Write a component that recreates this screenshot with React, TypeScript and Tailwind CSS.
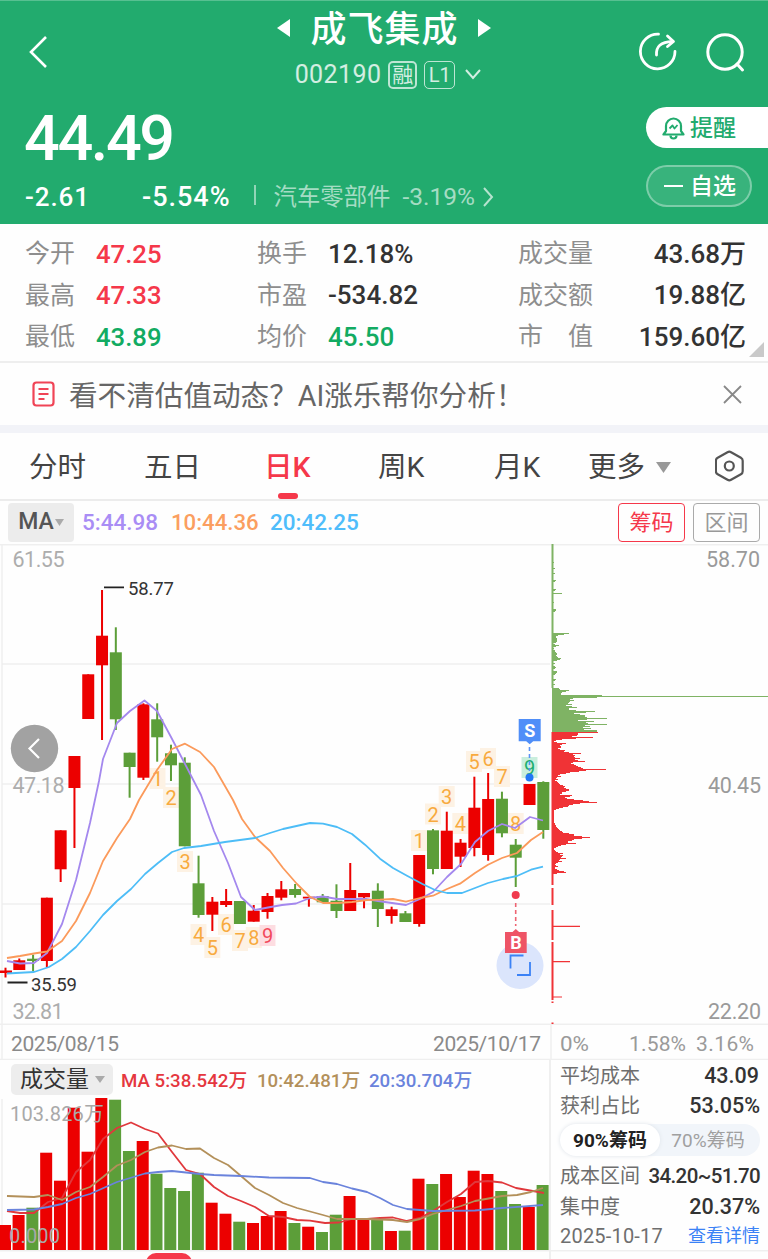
import { useState } from "react";

const RED = "#ec0000";
const GREEN = "#5c9e39";

// up/down, high, body top, body bottom, low
const candles: [string, number, number, number, number][] = [
  ["r", 967.7, 970.5, 973, 977.5],
  ["r", 958.5, 960.3, 970, 970],
  ["g", 954.7, 958.7, 961, 971],
  ["r", 897.7, 897.7, 961, 967.3],
  ["r", 830.3, 830.3, 869.3, 882],
  ["r", 756, 756, 788, 848],
  ["r", 674.3, 674.3, 719, 719],
  ["r", 590, 635.7, 665.3, 740],
  ["g", 627.3, 652.3, 719.3, 730],
  ["g", 752.7, 752.7, 767, 797.7],
  ["r", 703.3, 704.3, 777.7, 780],
  ["g", 703.3, 719.3, 737.3, 761.7],
  ["g", 744.7, 753.3, 765.3, 781],
  ["g", 757.3, 762.7, 846.3, 846.3],
  ["g", 855.7, 883.3, 915, 917.7],
  ["r", 897, 901.7, 914.7, 931],
  ["r", 889, 901, 905, 907],
  ["g", 901, 901, 924, 924],
  ["r", 905, 910.7, 921.7, 921.7],
  ["r", 893, 896, 912, 918.7],
  ["r", 881, 889.3, 897.7, 900.3],
  ["g", 884, 889, 895, 897.7],
  ["r", 896.7, 896.7, 898.5, 906.7],
  ["g", 894, 896, 902.3, 902.3],
  ["g", 884.3, 900.7, 911, 918],
  ["r", 863, 890, 911, 911],
  ["r", 893, 893, 897.3, 908.3],
  ["g", 883.3, 890.7, 909, 927],
  ["r", 906.7, 909.3, 916, 923.7],
  ["g", 911, 913.3, 922, 922],
  ["r", 855, 855, 924, 926.7],
  ["g", 829, 830.3, 869, 874.3],
  ["r", 811.7, 830.7, 869, 869],
  ["r", 839, 842.7, 856.7, 867],
  ["r", 776.7, 807.7, 848, 856.3],
  ["r", 773, 799, 855, 860.7],
  ["g", 791.7, 798.7, 833.3, 837.3],
  ["g", 839, 844.7, 857.7, 887],
  ["r", 784, 784, 805, 805],
  ["g", 781.3, 782, 830, 838.7],
];

const volumeTops = [
  1225, 1215, 1207.7, 1152.7, 1180.7, 1107.7, 1151.7, 1098, 1099.7, 1151, 1141,
  1173.7, 1188, 1191, 1172.7, 1202.7, 1213.7, 1221.7, 1223, 1216, 1211, 1223,
  1226.7, 1232, 1214.7, 1196, 1220, 1219, 1231, 1230.7, 1178.7, 1184, 1174,
  1197, 1170.7, 1174, 1191, 1204, 1207, 1185,
];

const priceLines = [
  {
    color: "#a488ee",
    points:
      "7,961 20,963.5 34,963 47,953 62,924 76,880 90,823 99,781 103,759 117,723 130,711 144.5,700.5 157,711 171,737 184,762 201,795 214,831 228,863 241,897 255,910 268,907.5 282,905 296,903.5 310,898 323,896.5 337,899 352,899 366,899 378,901 392,903 406,905 420,899 433,892 447,877 461,864 475,842 488,831 502,824 515,828 530,817 543,820.5",
  },
  {
    color: "#fb9a5b",
    points:
      "7,958 20,956 34,953.5 47,951.5 62,941 76,921 90,893 103,861 117,838 130,819 139,800 157,770 172,749 185,743.7 200,752 214,767 233,800 242,819 255,837 270,851 283,868 297,884 310,897 323,903 337,903 352,902 367,900 380,899.7 393,899 406,901.7 420,898 433,895.7 447,889 460,883.7 475,873 488,864.7 502,858 517,853 531,840 543,832",
  },
  {
    color: "#4dbdf7",
    points:
      "7,973.5 34,972 49,967 62,959 76,947 90,931 103,915 117,901 131,889 145,874 158,863 172,852 184,848 201,846 225,842 255,838 270,833 283,829 310,823 323,823.7 337,827 352,834 365,844.7 380,858.7 393,868 407,875.7 422,883.7 435,890 447,893 462,893 475,888 488,883 503,879 517,876 531,869.7 543,866.7",
  },
];

const volumeLines = [
  {
    color: "#e0383c",
    points:
      "7,1211 20,1213 34,1213 48,1202 62,1198 76,1172 90,1160 103,1139 117,1128 131,1122.5 145,1129 158,1133.5 172,1152 186,1170 200,1174 214,1187 228,1196 241,1201 255,1207 269,1216 283,1217 297,1220 310,1220.7 325,1223 339,1222.5 352,1219 367,1219 380,1218 393,1217.5 407,1221 420,1218 433,1211 447,1202 461,1194 475,1182 488,1181 502,1182.5 516,1188 530,1190.5 544,1193",
  },
  {
    color: "#b3905a",
    points:
      "7,1196 34,1197 48,1195 62,1200 76,1192 90,1187 103,1177 117,1165.5 131,1160 145,1152 158,1147.5 172,1145.5 186,1149 200,1148.5 214,1158 228,1165 241,1176 255,1188 269,1195 283,1203 297,1208 323,1215 337,1219 352,1219 367,1219 393,1220 407,1222 420,1219 433,1214 447,1210 461,1206 475,1201 502,1196 517,1195 531,1192 543,1188",
  },
  {
    color: "#6a83dc",
    points:
      "7,1210 34,1209.5 48,1207 62,1204 76,1198 90,1194 117,1182 145,1173.5 158,1172 172,1171 200,1174 214,1175 241,1176 269,1177.5 310,1178 323,1182 337,1184 352,1188.5 367,1192 380,1198 393,1205 407,1209 420,1210 433,1211 475,1210.5 502,1208 543,1205",
  },
];

// nine-count marks: label, x, y, kind
const marks: [string, number, number, string][] = [
  ["1", 157.5, 779, "o"],
  ["2", 171, 798, "o"],
  ["3", 185, 862, "o"],
  ["4", 198.5, 935, "o"],
  ["5", 212.3, 948, "o"],
  ["6", 226, 925, "o"],
  ["7", 240, 941, "o"],
  ["8", 253.8, 938, "o"],
  ["9", 267.5, 936, "r"],
  ["1", 419, 841, "o"],
  ["2", 433, 814.5, "o"],
  ["3", 446.7, 797, "o"],
  ["4", 460.3, 824, "o"],
  ["5", 474, 762, "o"],
  ["6", 488, 759, "o"],
  ["7", 502, 777, "o"],
  ["8", 515.7, 824, "o"],
  ["9", 529.5, 768, "g"],
];
const markBg: Record<string, string> = { o: "#fdf2e4", r: "#fddde1", g: "#c9eedd" };
const markText: Record<string, string> = { o: "#f8aa3e", r: "#f2495c", g: "#1fae6f" };

const thinChips: [number, number][] = [
  [562, 2], [568, 3], [573, 3], [580, 4], [581, 3], [589, 4], [590, 3], [593, 10],
  [602, 2], [609, 4], [610, 4], [611, 3], [633, 17], [634, 12], [635, 6], [636, 4],
  [637, 4], [638, 5], [639, 5], [640, 5], [641, 5], [642, 4], [644, 3], [645, 7],
  [646, 4], [648, 2], [650, 3], [651, 3], [652, 4], [653, 5], [654, 5], [655, 4],
  [656, 5], [657, 6], [658, 9], [659, 8], [660, 5], [663, 3], [666, 3], [667, 4],
  [668, 3], [671, 5], [672, 5], [673, 4], [674, 3], [679, 4], [680, 3], [684, 3],
];

// one value per pixel row, starting at y = 688
const chips = [
  7, 8, 17, 14, 10, 9, 9, 50, 216, 45, 21, 18, 22, 18, 17, 16, 20, 14, 20, 25,
  17, 17, 24, 43, 34, 22, 28, 33, 33, 35, 55, 35, 26, 42, 34, 36, 55, 33, 38,
  31, 39, 32, 45, 45, 46, 26, 26, 25, 20, 41, 24, 10, 4, 2, 5, 14, 10, 8, 9, 9,
  6, 8, 13, 12, 17, 29, 21, 23, 22, 23, 28, 23, 26, 33, 21, 19, 22, 24, 26, 29,
  31, 54, 34, 27, 18, 14, 8, 6, 9, 5, 4, 6, 3, 5, 6, 7, 8, 11, 13, 12, 14, 17,
  17, 14, 10, 10, 8, 20, 18, 13, 15, 22, 31, 37, 45, 28, 21, 17, 16, 11, 7, 4,
  2, 2, 2, 2, 2, 2, 2, 2, 2, 2, 2, 2, 2, 3, 3, 4, 4, 5, 6, 7, 8, 10, 11, 17,
  22, 22, 30, 38, 30, 22, 20, 16, 16, 24, 14, 9, 6, 4, 2, 2, 3, 4, 6, 11, 8, 11,
  10, 9, 14, 8, 7, 10, 6, 4, 3, 4, 6, 3, 3, 5, 7, 12, 14, 5,
];

const stats = [
  ["今开", "47.25", "text-[#f5384a]", "换手", "12.18%", "text-[#333]", "成交量", "43.68", "万"],
  ["最高", "47.33", "text-[#f5384a]", "市盈", "-534.82", "text-[#333]", "成交额", "19.88", "亿"],
  ["最低", "43.89", "text-[#12ab62]", "均价", "45.50", "text-[#12ab62]", "市　值", "159.60", "亿"],
];

function Header() {
  return (
    <header className="h-[224px] bg-[#22ab6e] border-t border-[#57c091] text-white flex flex-col">
      <div className="h-[98px] grid grid-cols-[160px_1fr_160px]">
        <div className="pl-[28px] pt-[34px]">
          <svg width="22" height="34" viewBox="0 0 22 34" fill="none" stroke="white" strokeWidth="2.6">
            <path d="M18 2 3 17l15 15" />
          </svg>
        </div>
        <div className="flex flex-col items-center">
          <div className="flex items-center h-[53px] gap-[20px]">
            <svg width="13" height="18" fill="white"><path d="M13 0v18L0 9z" /></svg>
            <h1 className="pt-[4px] text-[36px] font-medium tracking-[1px] leading-none -mr-px">成飞集成</h1>
            <svg width="13" height="18" fill="white"><path d="M0 0v18l13-9z" /></svg>
          </div>
          <div className="flex items-center h-[41px] pl-[8px] text-white/80">
            <span className="text-[25px] tracking-[0.4px]">002190</span>
            <span className="ml-[7px] w-[29px] h-[28px] border-2 border-white/70 rounded-[5px] text-[21px] leading-[24px] text-center">
              融
            </span>
            <span className="ml-[7px] w-[31px] h-[28px] border border-white/70 rounded-[5px] text-[20px] leading-[26px] text-center">
              L1
            </span>
            <svg className="ml-[10px]" width="16" height="11" fill="none" stroke="currentColor" strokeWidth="2">
              <path d="m1 1 7 8 7-8" />
            </svg>
          </div>
        </div>
        <div className="flex pt-[30px] pl-[31px] gap-[27px]">
          <svg width="40" height="42" viewBox="0 0 40 42" fill="none" stroke="white" strokeWidth="2.8" strokeLinecap="round" strokeLinejoin="round">
            <path d="M19.5 3.2A17.3 17.3 0 1 0 36 20.5" />
            <path d="M17.5 24c-.5-8.500 4-13 16-13.500" />
            <path d="m28.500 5 6 5.500-6 5" />
          </svg>
          <svg width="40" height="42" viewBox="0 0 40 42" fill="none" stroke="white" strokeWidth="3" strokeLinecap="round">
            <circle cx="19" cy="21" r="17.200" />
            <path d="m31 33 5.500 6" />
          </svg>
        </div>
      </div>
      <div className="flex justify-between h-[125px]">
        <div className="pl-[24px]">
          <div className="text-[63px] leading-[80px] h-[78px] font-medium tracking-[-2.400px]">44.49</div>
          <div className="flex items-center h-[40px] pl-px text-[26px] font-medium">
            <span className="w-[117px] tracking-[0.900px]">-2.61</span>
            <span className="w-[112px] text-[27px] tracking-[1px]">-5.54%</span>
            <div className="w-[1.500px] h-5 bg-white/50 mb-1" />
            <span className="ml-[18px] pt-[2px] font-normal text-[23.400px] text-white/60">汽车零部件</span>
            <span className="ml-3 font-normal text-[24.500px] text-white/60">-3.19%</span>
            <svg className="ml-2" width="12" height="20" fill="none" stroke="#ffffffaa" strokeWidth="2">
              <path d="m1 1 8 9-8 9" />
            </svg>
          </div>
        </div>
        <div className="pt-[8px]">
          <button className="flex items-center h-[41px] w-[122px] rounded-l-full bg-white text-[#22ab6e] pl-4 text-[23px] font-medium">
            <svg className="mr-[5px]" width="23" height="24" viewBox="0 0 23 24" fill="none" stroke="currentColor" strokeWidth="2.200" strokeLinejoin="round">
              <path d="M1.500 18.500h20l-2.500-3.500v-5a7.500 7.500 0 0 0-15 0v5z" />
              <path d="M7.500 12.500 10.500 9.500l2 3 3-3.500" strokeWidth="1.800" />
              <path d="M8.500 19.500c0 4 6 4 6 0" />
            </svg>
            <span className="pt-[3px]">提醒</span>
          </button>
          <button className="mt-[17px] flex items-center h-[42px] w-[106px] rounded-full bg-white/10 border-2 border-white/35 pl-[16px] text-[23px] font-medium">
            <span className="w-[19px] h-[2.500px] bg-white mr-[7px]" />
            <span className="pt-[2px]">自选</span>
          </button>
        </div>
      </div>
    </header>
  );
}

function Stats() {
  return (
    <section className="relative h-[139px] pt-[9px] border-b-2 border-[#eeeeee] text-[25px]">
      {stats.map((s) => (
        <div key={s[0]} className="flex items-center h-[41.500px] pl-[25px] pr-[22px] text-[#8e8e8e]">
          <span className="w-[71px]">{s[0]}</span>
          <span className={"w-[161px] pt-px text-[25.700px] font-medium " + s[2]}>{s[1]}</span>
          <span className="w-[71px]">{s[3]}</span>
          <span className={"w-[190px] pt-px text-[26px] font-medium " + s[5]}>{s[4]}</span>
          <span className="w-[76px]">{s[6]}</span>
          <span className="flex-1 pt-px text-right text-[26px] font-medium text-[#333]">
            {s[7]}
            {s[8]}
          </span>
        </div>
      ))}
      <svg className="absolute right-[4px] bottom-[4px]" width="15" height="15" fill="#c9c9c9">
        <path d="M15 0v15H0z" />
      </svg>
    </section>
  );
}

function Banner() {
  return (
    <section className="flex items-center h-[62px] pl-[32px] pr-[26px]">
      <svg width="23" height="26" viewBox="0 0 23 26" fill="none" stroke="#f04456" strokeWidth="2.200">
        <rect x="1.500" y="1.500" width="20" height="23" rx="3" />
        <path d="M6.500 8h10M6.500 13h10M6.500 18h6" />
      </svg>
      <p className="ml-[14px] pt-[4px] flex-1 text-[28.600px] leading-none text-[#666] whitespace-nowrap">
        看不清估值动态？AI涨乐帮你分析！
      </p>
      <svg width="19" height="19" stroke="#888" strokeWidth="1.800">
        <path d="m1 1 17 17M18 1 1 18" />
      </svg>
    </section>
  );
}

function Tabs() {
  const [active, setActive] = useState("日K");
  return (
    <nav className="grid grid-cols-[115px_120px_114px_116px_94px_127px_auto] h-[66px] pl-[29px] border-b-2 border-[#ececec] border-t-8 border-t-[#f2f3f8] box-content text-[28.500px] text-[#444]">
      {["分时", "五日", "日K", "周K", "月K"].map((tab) => (
        <button
          key={tab}
          onClick={() => setActive(tab)}
          className={"relative text-left pt-[5px] " + (tab === active ? "text-[#f5384a] font-medium" : "")}
        >
          {tab}
          {tab === active && (
            <span className="absolute left-[14px] bottom-0 w-[20px] h-[6px] rounded-[3px] bg-[#f5384a]" />
          )}
        </button>
      ))}
      <button className="flex items-center">
        <span className="pt-[5px]">更多</span>
        <svg className="ml-[11px] mt-[2px]" width="15" height="11" fill="#999">
          <path d="M0 0h15L7.500 11z" />
        </svg>
      </button>
      <button className="flex items-center">
        <svg width="30" height="32" viewBox="0 0 30 32" fill="none" stroke="#555" strokeWidth="2.200" strokeLinejoin="round">
          <path d="M12.500 2.200q1.800-1 3.600 0l9.800 5.500q1.800 1 1.800 3v10.600q0 2-1.800 3l-9.800 5.500q-1.800 1-3.600 0l-9.800-5.500q-1.800-1-1.800-3V10.700q0-2 1.800-3z" />
          <circle cx="14.300" cy="16" r="4.500" />
        </svg>
      </button>
    </nav>
  );
}

function MaRow() {
  return (
    <div className="flex items-center h-[43px] pl-[8px] pr-[8px] text-[22.500px] font-medium">
      <button className="flex items-center justify-center w-[66px] h-[39px] rounded-[4px] bg-[#ececec] text-[#555] text-[23px]">
        MA
        <svg className="ml-[1px]" width="9" height="7" fill="#aaa"><path d="M0 0h9L4.500 7z" /></svg>
      </button>
      <span className="ml-[8px] w-[89px] text-[#a98df5]">5:44.98</span>
      <span className="w-[99px] text-[22.200px] text-[#fb9e60]">10:44.36</span>
      <span className="flex-1 text-[#4fbdfb]">20:42.25</span>
      <button className="w-[67px] h-[39px] rounded-[4px] border-[1.500px] border-[#f5384a] text-[#f5384a] text-[22px] leading-none font-normal">
        筹码
      </button>
      <button className="ml-[8px] w-[67px] h-[39px] rounded-[4px] border-[1.500px] border-[#aaa] text-[#999] text-[22px] leading-none font-normal">
        区间
      </button>
    </div>
  );
}

function PriceChart() {
  return (
    <svg className="block" width="768" height="516" viewBox="0 544 768 516">
      <g stroke="#efefef" strokeWidth="1.500">
        <path d="M0 544.700H768M2 664H550M2 784H550M2 904H550M0 1024.300H768M0 1059.500H768M2 544V1060M551 1024V1060" />
      </g>

      <g fontSize="21.500" fill="#adadad">
        <text x="12.500" y="567" textLength="52">61.55</text>
        <text x="12.500" y="793" textLength="52">47.18</text>
        <text x="12.500" y="1019" textLength="51">32.81</text>
      </g>

      {marks.map(([n, x, y, kind], i) => (
        <g key={i}>
          <rect x={x - 8} y={y - 11} width="16" height="21" fill={markBg[kind]} />
          <text x={x} y={y + 7} fontSize="20" textAnchor="middle" fill={markText[kind]}>
            {n}
          </text>
        </g>
      ))}

      {candles.map(([dir, high, top, bottom, low], i) => {
        const x = 5.500 + i * 13.790;
        return (
          <g key={i} fill={dir === "r" ? RED : GREEN}>
            <rect x={x - 1} y={high} width="2" height={low - high} />
            <rect x={Math.max(0, x - 6)} y={top} width="12" height={bottom - top} />
          </g>
        );
      })}

      {priceLines.map((l) => (
        <polyline key={l.color} points={l.points} fill="none" stroke={l.color} strokeWidth="1.800" strokeLinejoin="round" />
      ))}

      <path d="M104 587.300h20M7.500 982.500h20" stroke="#222" strokeWidth="1.800" />
      <g fontSize="18.500" fill="#333">
        <text x="128" y="595" textLength="46">58.77</text>
        <text x="31" y="990.500" textLength="46">35.59</text>
      </g>

      {/* sell mark */}
      <path d="M529.500 747v24" stroke="#5a93f5" strokeWidth="1.600" strokeDasharray="4 3" />
      <circle cx="529.500" cy="777.500" r="4" fill="#2277f5" />
      <path d="M518.700 719h22v22.300h-7.500l-3.500 3-3.500-3h-7.500z" fill="#4f8ef8" />
      <text x="529.700" y="736.500" fontSize="18" fontWeight="bold" textAnchor="middle" fill="white">S</text>

      {/* buy mark */}
      <circle cx="520" cy="965.500" r="23.500" fill="#dbe5fc" />
      <path d="M515.700 903v23" stroke="#ee6472" strokeWidth="1.600" strokeDasharray="4 3" />
      <circle cx="515.700" cy="895" r="4" fill="#f03a4d" />
      <path d="M505 932h7.500l3.300-3 3.300 3h7.600v21h-21.700z" fill="#ee5466" />
      <text x="515.900" y="949" fontSize="18" fontWeight="bold" textAnchor="middle" fill="white">B</text>
      <path d="M510.500 968.500V955.500H523.500M517 975H530V962" fill="none" stroke="#3b82f6" strokeWidth="1.800" />

      {/* scroll left */}
      <circle cx="34.500" cy="748.500" r="23.700" fill="#a2a2a2" />
      <path d="m39 739-9.500 9.500 9.500 9.500" fill="none" stroke="white" strokeWidth="2.200" />

      {/* chip distribution */}
      <g fill="#7fb364">
        <rect x="551.500" y="544" width="2" height="144" />
        {thinChips.map(([y, w]) => (
          <rect key={y} x="552" y={y} width={w} height="1" />
        ))}
      </g>
      {chips.map((w, i) => (
        <rect key={i} x="552" y={688 + i} width={w} height="1" fill={i < 44 ? "#7fb364" : "#f03336"} />
      ))}
      <path
        d="M552.500 732v153M552.500 888v17M552.500 910v30M552.500 942v58M552.500 1001.500v1.500M552.500 1022.500v1.500"
        stroke="#f03336"
        strokeWidth="2"
      />
      <path d="M552 926.300h28M552 961.700h18M552 997h10" stroke="#f03336" strokeWidth="1.200" />

      <g fontSize="21.500" fill="#9a9a9a">
        <text x="706" y="567" textLength="54">58.70</text>
        <text x="708" y="793" textLength="53">40.45</text>
        <text x="708" y="1019" textLength="53">22.20</text>
      </g>
      <g fontSize="21" fill="#8a8a8a">
        <text x="11" y="1051" textLength="108">2025/08/15</text>
        <text x="433" y="1051" textLength="108">2025/10/17</text>
      </g>
      <g fontSize="21" fill="#9a9a9a">
        <text x="560" y="1051" textLength="29" lengthAdjust="spacingAndGlyphs">0%</text>
        <text x="629" y="1051" textLength="57">1.58%</text>
        <text x="696" y="1051" textLength="58">3.16%</text>
      </g>
    </svg>
  );
}

function VolumeChart() {
  return (
    <div className="w-[551px] h-[199px] border-r-2 border-[#efefef]">
      <div className="flex items-center h-[39px] pl-[11px] text-[18.700px] font-medium whitespace-nowrap">
        <button className="flex items-center w-[102px] h-[31px] pl-[9px] rounded-[5px] bg-[#ededed] text-[#333] text-[23px] font-normal">
          <span className="pt-[2px]">成交量</span>
          <svg className="ml-[6px]" width="10" height="7" fill="#aaa"><path d="M0 0h10L5 7z" /></svg>
        </button>
        <span className="ml-[8px] pt-[3px] w-[136px] text-[#e5373f]">MA 5:38.542万</span>
        <span className="pt-[3px] w-[112px] text-[#b3905a]">10:42.481万</span>
        <span className="pt-[3px] text-[#6a83dc]">20:30.704万</span>
      </div>
      <svg className="block" width="549" height="160" viewBox="0 1099 549 160" overflow="visible">
        <path d="M2 1099v151" stroke="#efefef" strokeWidth="1.500" />
        {volumeTops.map((top, i) => {
          const x = Math.max(0, 4.800 + i * 13.790 - 6);
          return (
            <rect
              key={i}
              x={x}
              y={top}
              width={i === 0 ? 11 : 12}
              height={1250 - top}
              fill={candles[i][0] === "r" ? RED : GREEN}
            />
          );
        })}
        {volumeLines.map((l) => (
          <polyline key={l.color} points={l.points} fill="none" stroke={l.color} strokeWidth="1.800" strokeLinejoin="round" />
        ))}
        <g fontSize="20" fill="#a9a9a9">
          <text x="10" y="1121" textLength="94">103.826万</text>
          <text x="9" y="1243" textLength="51">0.000</text>
        </g>
        <path d="M0 1250.700H768" stroke="#efefef" strokeWidth="1.500" />
        <rect x="146" y="1253" width="46" height="20" rx="10" fill="#f5384a" />
      </svg>
    </div>
  );
}

function ChipPanel() {
  const row = "flex items-center justify-between text-[20px] text-[#6e6e6e]";
  const value = "text-[21.500px] font-medium text-[#333]";
  return (
    <aside className="flex-1 pl-[9px] pr-[8px] pt-px whitespace-nowrap">
      <div className={row + " h-[30px] pr-px"}>
        平均成本<span className={value}>43.09</span>
      </div>
      <div className={row + " h-[30px]"}>
        获利占比<span className={value}>53.05%</span>
      </div>
      <div className="mt-[3px] flex h-[32px] rounded-full bg-[#f1f5fa] text-[19px] leading-[33px] text-center">
        <span className="w-[100px] rounded-full bg-white shadow-[0_0_4px_#dfe4ea] font-bold text-[#222]">90%筹码</span>
        <span className="flex-1 pr-1 text-[#a0a0a0]">70%筹码</span>
      </div>
      <div className={row + " mt-[4px] h-[32px]"}>
        成本区间<span className="text-[20.500px] tracking-[-0.600px] font-medium text-[#333]">34.20~51.70</span>
      </div>
      <div className={row + " h-[30px]"}>
        集中度<span className={value}>20.37%</span>
      </div>
      <div className={row + " h-[27px]"}>
        <span className="tracking-[0.200px]">2025-10-17</span>
        <a className="text-[18px] text-[#3b82f6]">查看详情</a>
      </div>
    </aside>
  );
}

export default function App() {
  return (
    <main className="w-[768px] h-[1259px] overflow-hidden bg-[#fefefe] font-[Roboto,'Noto_Sans_CJK_SC',sans-serif]">
      <Header />
      <Stats />
      <Banner />
      <Tabs />
      <MaRow />
      <PriceChart />
      <div className="flex">
        <VolumeChart />
        <ChipPanel />
      </div>
    </main>
  );
}
